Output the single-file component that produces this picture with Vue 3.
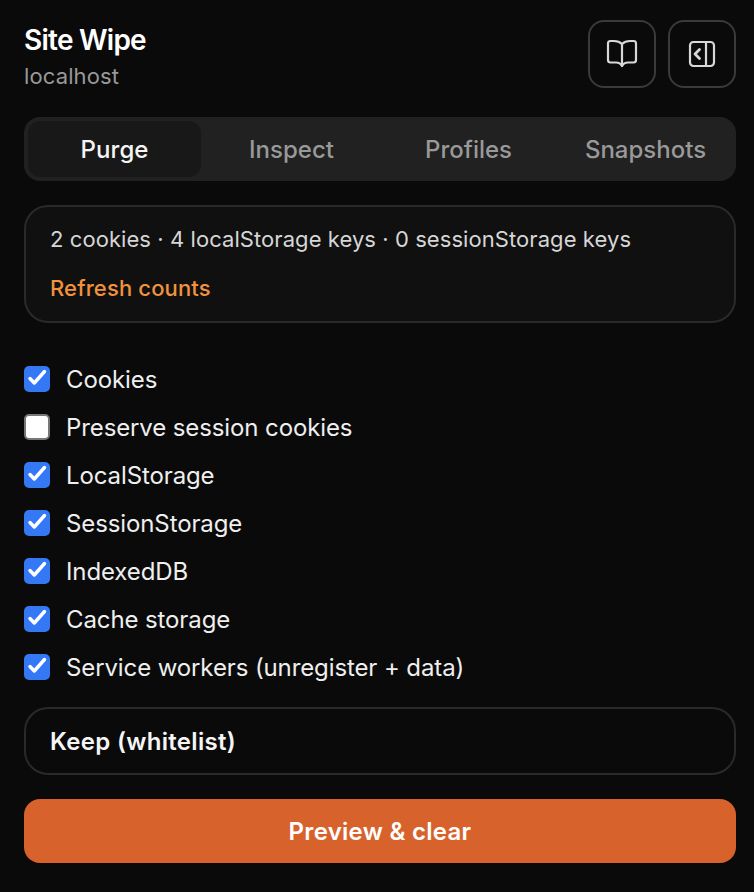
<script setup>
const tabs = ['Purge', 'Inspect', 'Profiles', 'Snapshots']
const options = [
  { label: 'Cookies', on: true },
  { label: 'Preserve session cookies', on: false },
  { label: 'LocalStorage', on: true },
  { label: 'SessionStorage', on: true },
  { label: 'IndexedDB', on: true },
  { label: 'Cache storage', on: true },
  { label: 'Service workers (unregister + data)', on: true },
]
</script>

<template>
  <main class="popup">
    <header class="head">
      <div class="brand">
        <h1>Site Wipe</h1>
        <p>localhost</p>
      </div>
      <div class="actions">
        <button class="icon-btn" aria-label="Docs">
          <svg width="32" height="32" viewBox="0 0 32 32" fill="none" stroke="currentColor" stroke-width="2.2" stroke-linejoin="round" stroke-linecap="round">
            <path d="M16 6C14 4 11 3 8 3H4.5Q2 3 2 5.5V22Q2 24.5 4.5 24.5H10C13 24.5 15 26 16 28C17 26 19 24.5 22 24.5H27.5Q30 24.5 30 22V5.500Q30 3 27.5 3H24C21 3 18 4 16 6Z" />
            <path d="M16 6V28" />
          </svg>
        </button>
        <button class="icon-btn" aria-label="Side panel">
          <svg width="32" height="32" viewBox="0 0 32 32" fill="none" stroke="currentColor" stroke-width="2.2" stroke-linejoin="round" stroke-linecap="round">
            <rect x="4" y="4" width="24" height="24" rx="3.5" />
            <path d="M20 4V28" />
            <path d="M13.5 11.5L9 16L13.5 20.5" stroke-width="2.8" />
          </svg>
        </button>
      </div>
    </header>

    <nav class="tabs">
      <button v-for="(t, i) in tabs" :key="t" class="tab" :class="{ active: i === 0 }">{{ t }}</button>
    </nav>

    <section class="counts">
      <p>2 cookies · 4 localStorage keys · 0 sessionStorage keys</p>
      <a class="refresh">Refresh counts</a>
    </section>

    <ul class="options">
      <li v-for="o in options" :key="o.label" class="option">
        <span class="box" :class="{ on: o.on }">
          <svg v-if="o.on" width="26" height="26" viewBox="0 0 26 26" fill="none" stroke="#fff" stroke-width="3.4" stroke-linecap="round" stroke-linejoin="round">
            <path d="M6 12.5L10.3 17L20.5 5.5" />
          </svg>
        </span>
        <span class="label">{{ o.label }}</span>
      </li>
    </ul>

    <section class="keep">Keep (whitelist)</section>

    <button class="primary">Preview &amp; clear</button>
  </main>
</template>

<style>
html, body { margin: 0; background: #0a0a0a; }
</style>

<style scoped>
.popup {
  box-sizing: border-box;
  width: 754px;
  height: 892px;
  padding: 20px 18px 29px 24px;
  background: #0a0a0a;
  color: #efefef;
  font-family: Inter, "Noto Sans", sans-serif;
  font-size: 24px;
}
.head {
  display: flex;
  justify-content: space-between;
  align-items: flex-start;
  height: 68px;
  margin-bottom: 29px;
}
.brand h1 {
  margin: 0;
  font-size: 28px;
  line-height: 40px;
  font-weight: 600;
  letter-spacing: -0.75px;
  color: #fff;
}
.brand p {
  margin: 0;
  font-size: 22px;
  line-height: 32px;
  letter-spacing: 0.12px;
  color: #999;
}
.actions { display: flex; gap: 12px; }
.icon-btn {
  box-sizing: border-box;
  width: 68px;
  height: 68px;
  display: flex;
  align-items: center;
  justify-content: center;
  padding: 0;
  background: #0a0a0a;
  border: 2px solid #3a3a3a;
  border-radius: 16px;
  color: #d8d8d8;
}
.tabs {
  box-sizing: border-box;
  width: 712px;
  height: 64px;
  display: grid;
  grid-template-columns: repeat(4, 1fr);
  gap: 4px;
  padding: 4px;
  background: #212121;
  border-radius: 16px;
}
.tab {
  border: 0;
  padding: 0;
  background: transparent;
  border-radius: 12px;
  color: #999;
  font: 500 24px Inter, sans-serif;
}
.tab.active { background: #181818; color: #f5f5f5; letter-spacing: 0.1px; }
.counts {
  box-sizing: border-box;
  width: 712px;
  height: 118px;
  margin-top: 24px;
  padding: 18px 24px;
  background: #101010;
  border: 2px solid #2a2a2a;
  border-radius: 24px;
}
.counts p {
  margin: 0 0 19px;
  font-size: 22px;
  line-height: 28px;
  letter-spacing: 0.07px;
  color: #d6d6d6;
}
.refresh {
  display: block;
  font-size: 22px;
  line-height: 32px;
  font-weight: 500;
  letter-spacing: 0.14px;
  color: #f0923e;
}
.options {
  list-style: none;
  margin: 32px 0 0;
  padding: 0;
  display: flex;
  flex-direction: column;
}
.option {
  display: flex;
  align-items: center;
  gap: 16px;
  height: 48px;
}
.label { letter-spacing: -0.11px; }
.box {
  box-sizing: border-box;
  width: 26px;
  height: 26px;
  flex: none;
  background: #fff;
  border: 2px solid #777;
  border-radius: 5px;
}
.box.on { background: #3478f6; border: 0; }
.keep {
  box-sizing: border-box;
  width: 712px;
  height: 68px;
  margin-top: 16px;
  padding: 0 24px;
  display: flex;
  align-items: center;
  border: 2px solid #2a2a2a;
  border-radius: 24px;
  font-weight: 600;
  letter-spacing: 0.32px;
  color: #f5f5f5;
}
.primary {
  display: block;
  width: 712px;
  height: 64px;
  margin-top: 24px;
  border: 0;
  border-radius: 16px;
  background: #d8622b;
  color: #fff;
  font: 600 24px Inter, sans-serif;
  letter-spacing: 0.28px;
}
</style>
